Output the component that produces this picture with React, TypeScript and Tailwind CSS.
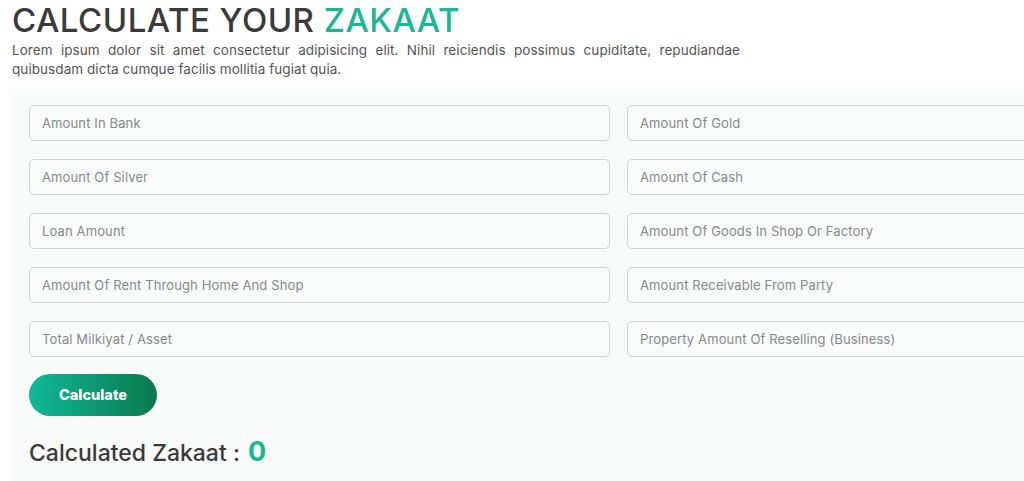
import { useState } from 'react';

const fields = [
  'Amount In Bank',
  'Amount Of Gold',
  'Amount Of Silver',
  'Amount Of Cash',
  'Loan Amount',
  'Amount Of Goods In Shop Or Factory',
  'Amount Of Rent Through Home And Shop',
  'Amount Receivable From Party',
  'Total Milkiyat / Asset',
  'Property Amount Of Reselling (Business)',
];

export default function App() {
  const [values, setValues] = useState<Record<string, string>>({});
  const [zakaat, setZakaat] = useState(0);

  const calculate = () => {
    const total = Object.values(values).reduce((sum, v) => sum + (parseFloat(v) || 0), 0);
    setZakaat(Math.round(total * 0.025));
  };

  return (
    <div className="min-h-screen w-full overflow-hidden bg-white font-['Inter',sans-serif] text-[#3d3d3d]">
      <div className="px-3 pt-[1px]">
        <h1 className="text-[33px] font-medium leading-[38px] tracking-[0.015em] text-[#3a3a3a]">
          CALCULATE YOUR <span className="text-[#1cb596]">ZAKAAT</span>
        </h1>
        <p className="mt-[2px] max-w-[728px] text-justify text-[13.5px] leading-[19px] tracking-[0.005em] text-[#555]">
          Lorem ipsum dolor sit amet consectetur adipisicing elit. Nihil reiciendis possimus cupiditate, repudiandae
          quibusdam dicta cumque facilis mollitia fugiat quia.
        </p>
      </div>

      <div className="ml-[10px] mt-[11px] w-[1217px] bg-[#f8f9f9] px-[19px] pb-5 pt-[15px] shadow-[0_0_6px_rgba(0,0,0,0.05)]">
        <div className="grid grid-cols-2 gap-x-[17px] gap-y-[18px]">
          {fields.map((f) => (
            <input
              key={f}
              type="text"
              placeholder={f}
              value={values[f] ?? ''}
              onChange={(e) => setValues({ ...values, [f]: e.target.value })}
              className="h-9 w-full rounded-[5px] border border-[#d2d4d4] bg-[#f9fafa] px-[12px] text-[13px] tracking-[0.01em] text-[#444] outline-none placeholder:text-[#858a8a]"
            />
          ))}
        </div>

        <button
          onClick={calculate}
          className="mt-[17px] h-[42px] w-[128px] rounded-full bg-gradient-to-r from-[#10b898] to-[#0a7a4e] text-[14.5px] font-extrabold text-white"
        >
          Calculate
        </button>

        <div className="mt-[16px] flex items-baseline text-[23px] font-medium text-[#3a3a3a]">
          Calculated Zakaat :
          <span className="ml-2 text-[27px] font-bold text-[#1cb596]">{zakaat}</span>
        </div>
      </div>
    </div>
  );
}
